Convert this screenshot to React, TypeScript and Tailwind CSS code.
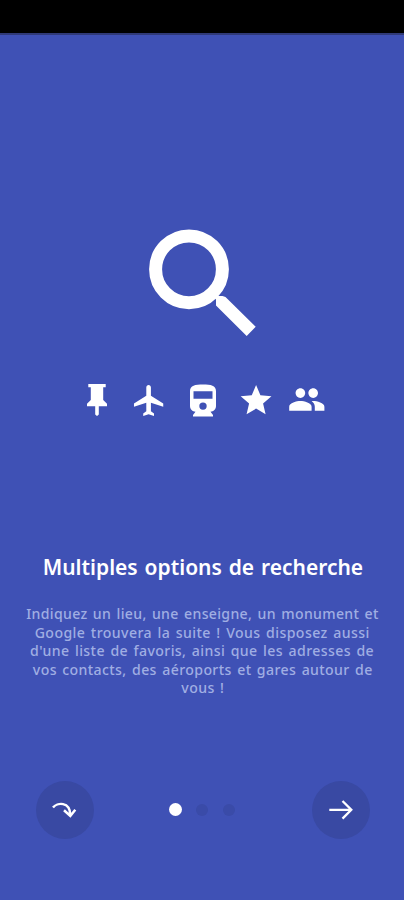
const lines = [
  { text: 'Indiquez un lieu, une enseigne, un monument et', cls: 'tracking-[0.34px]' },
  { text: 'Google trouvera la suite ! Vous disposez aussi', cls: 'tracking-[0.45px]' },
  { text: "d'une liste de favoris, ainsi que les adresses de", cls: 'tracking-[0.43px]' },
  { text: 'vos contacts, des aéroports et gares autour de', cls: 'tracking-[0.4px]' },
  { text: 'vous !', cls: 'tracking-[0.4px]' },
];

function SearchGlyph() {
  return (
    <svg className="ml-[148px] block h-[108px] w-[109px]" viewBox="148 229 109 108">
      <circle cx="189" cy="269.3" r="33.4" fill="none" stroke="#fff" strokeWidth="13" />
      <path d="M212 295l4 4.500v6l30.700 30.500 9-9.300-30.200-29.700-3-1h-4l-3-3z" fill="#fff" />
    </svg>
  );
}

function OptionIcons() {
  return (
    <svg className="ml-[80px] block h-[40px] w-[250px]" viewBox="80 380 250 40" fill="#fff">
      <path d="M88.300 384h17.400v3.200h-2.500v12.800l3.800 3.700v2.600h-8.200v8.200l-1.800 1.500-1.800-1.500v-8.200h-8.200v-2.600l3.800-3.700v-12.800h-2.500z" />
      <path transform="translate(130.900 382) scale(1.540)" d="M21 16v-2l-8-5V3.500c0-.83-.67-1.500-1.500-1.500S10 2.670 10 3.500V9l-8 5v2l8-2.500V19l-2 1.500V22l3.500-1 3.500 1v-1.500L13 19v-5.500l8 2.500z" />
      <path fillRule="evenodd" d="M190 391c0-5.500 5.200-6.500 13-6.500s13 1 13 6.500v15c0 3.400-2.500 5.500-5.500 5.800l2.500 3.200v1.500h-20V415l2.500-3.200c-3-.3-5.500-2.400-5.500-5.800zm3.500.2v7.600h19v-7.600zm9.500 11.200a3.700 3.700 0 1 0 0 7.400 3.700 3.700 0 0 0 0-7.400z" />
      <path transform="translate(237.600 382) scale(1.540)" d="M12 17.270L18.180 21l-1.640-7.030L22 9.240l-7.190-.61L12 2 9.190 8.630 2 9.240l5.460 4.730L5.820 21z" />
      <path transform="translate(287.600 380.300) scale(1.600)" d="M16 11c1.660 0 2.990-1.340 2.990-3S17.660 5 16 5c-1.660 0-3 1.340-3 3s1.340 3 3 3zm-8 0c1.660 0 2.990-1.340 2.990-3S9.660 5 8 5C6.340 5 5 6.340 5 8s1.340 3 3 3zm0 2c-2.330 0-7 1.170-7 3.500V19h14v-2.500c0-2.330-4.670-3.500-7-3.500zm8 0c-.29 0-.62.020-.97.050 1.160.840 1.970 1.970 1.970 3.450V19h6v-2.500c0-2.330-4.670-3.500-7-3.500z" />
    </svg>
  );
}

export default function App() {
  return (
    <main className="flex h-[900px] w-[404px] flex-col overflow-hidden bg-[#3f51b5] font-['Noto_Sans','Open_Sans',sans-serif]">
      <div className="h-[35px] shrink-0 border-b-2 border-[#303a78] bg-black" />
      <div className="mt-[194px]"><SearchGlyph /></div>
      <div className="mt-[43px]"><OptionIcons /></div>
      <h1 className="mt-[131px] flex h-[30px] items-center justify-center whitespace-nowrap pl-[2px] text-[22px] font-semibold leading-[30px] text-white [word-spacing:1.5px]">
        <span className="inline-block scale-x-[0.954]">Multiples options de recherche</span>
      </h1>
      <div className="mt-[23px] flex flex-col items-center pl-px text-[15px] font-medium leading-[18.5px] text-[#a0aee3] [word-spacing:1.5px]">
        {lines.map((line) => (
          <span key={line.text} className={'scale-x-[0.94] whitespace-nowrap ' + line.cls}>{line.text}</span>
        ))}
      </div>
      <div className="mt-[84px] flex h-[58px] items-center pl-[36px]">
        <button className="flex size-[58px] items-center justify-center rounded-full bg-[#3949a3]" aria-label="Passer">
          <svg className="size-[58px]" viewBox="36 781 58 58" fill="none" stroke="#fff" strokeWidth="2.500">
            <path d="M53 807.500c4-5 17-6.500 17.300 7.500M64 810.300l6.300 5.700 5-6.300" />
          </svg>
        </button>
        <div className="ml-[75px] flex items-center gap-[14px]">
          <span className="size-[13px] rounded-full bg-white" />
          <span className="size-[12px] rounded-full bg-[#3a4ba8]" />
          <span className="ml-px size-[12px] rounded-full bg-[#3a4ba8]" />
        </div>
        <button className="ml-[77px] flex size-[58px] items-center justify-center rounded-full bg-[#3949a3]" aria-label="Suivant">
          <svg className="size-[58px]" viewBox="312 781 58 58" fill="none" stroke="#fff" strokeWidth="2.300">
            <path d="M329.300 809.800h22M342.500 801l8.800 8.800-8.800 8.800" />
          </svg>
        </button>
      </div>
    </main>
  );
}
